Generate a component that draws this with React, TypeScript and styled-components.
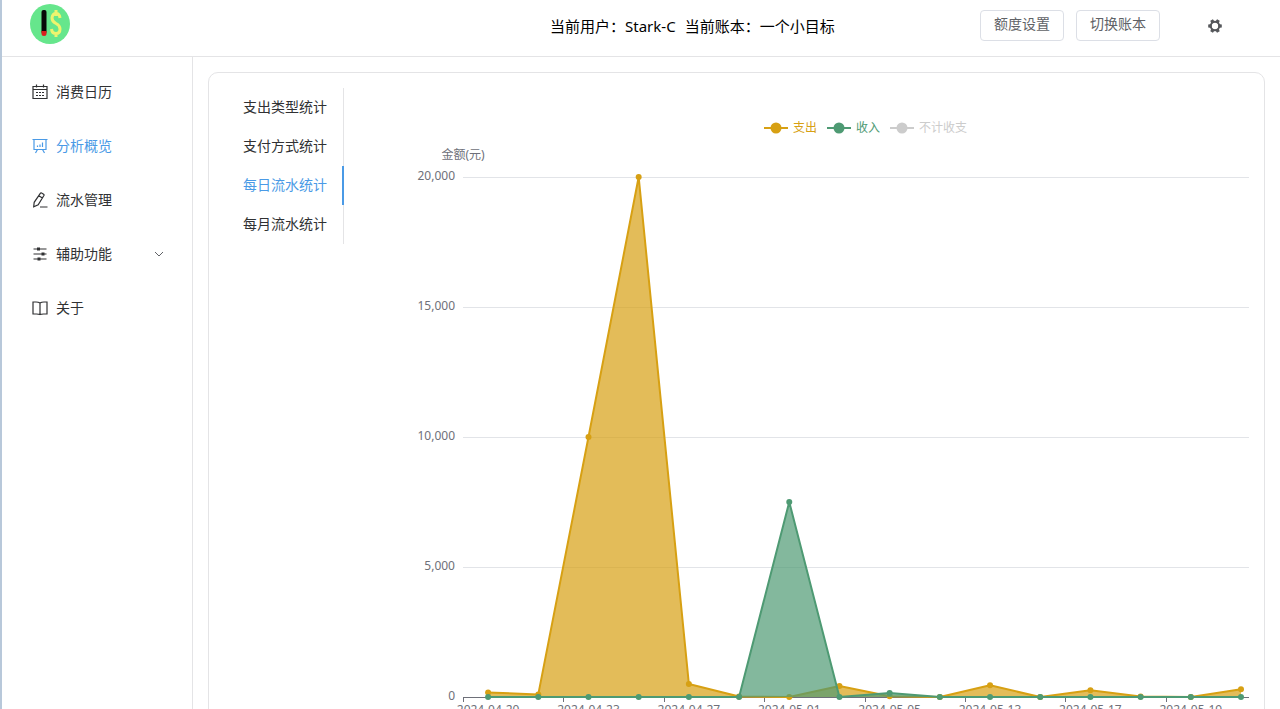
import React, { useEffect, useRef, useState } from "react";
import styled, { createGlobalStyle } from "styled-components";

const GlobalStyle = createGlobalStyle`
  *, *::before, *::after { box-sizing: border-box; }
  body {
    margin: 0;
    background: #fff;
    color: #303133;
    font-family: "Noto Sans", "Noto Sans CJK SC", sans-serif;
    font-size: 14px;
  }
  button { font: inherit; }
`;

const blue = "#4a9ae6";
const line = "#e4e4e6";

const Page = styled.div`
  display: flex;
  flex-direction: column;
  height: 100vh;
  border-left: 2px solid #b8c8da;
`;

const Header = styled.header`
  display: grid;
  grid-template-columns: 7fr 10fr 300px;
  flex: none;
  height: 57px;
  border-bottom: 1px solid ${line};
`;

const Brand = styled.a`
  display: block;
  justify-self: start;
  margin: 4px 0 0 28px;
  height: 40px;
`;

const Account = styled.p`
  display: flex;
  justify-content: center;
  align-items: center;
  gap: 9px;
  margin: 0;
  padding-bottom: 4px;
  color: #000;
  font-size: 15px;
  line-height: 24px;
  white-space: nowrap;
`;

const Actions = styled.div`
  display: flex;
  align-items: center;
  gap: 12px;
  padding: 0 58px 5px 0;
`;

const OutlineButton = styled.button`
  height: 31px;
  padding: 0 13px 3px;
  border: 1px solid #dcdfe6;
  border-radius: 4px;
  background: #fff;
  color: #606266;
  line-height: 20px;
  cursor: pointer;
`;

const IconButton = styled.button`
  display: flex;
  margin-left: auto;
  padding: 0;
  border: 0;
  background: none;
  color: #55575b;
  cursor: pointer;
`;

const Body = styled.div`
  display: flex;
  flex: 1;
  min-height: 0;
`;

const Sidebar = styled.nav`
  flex: none;
  width: 191px;
  padding-top: 8px;
  border-right: 1px solid ${line};
`;

const MenuLink = styled.a<{ $active?: boolean }>`
  display: flex;
  align-items: center;
  gap: 8px;
  height: 54px;
  padding: 0 28px 0 30px;
  color: ${(p) => (p.$active ? blue : "#303133")};
  line-height: 20px;
  text-decoration: none;
`;

const MenuLabel = styled.span`
  flex: 1;
`;

const Main = styled.main`
  flex: 1;
  min-width: 0;
  padding: 15px 15px 16px;
  overflow-y: auto;
  scrollbar-width: none;
`;

const Card = styled.section`
  display: flex;
  padding: 15px;
  border: 1px solid ${line};
  border-radius: 10px;
`;

const Tabs = styled.div`
  flex: none;
  align-self: flex-start;
  width: 120px;
  border-right: 1px solid ${line};
`;

const Tab = styled.button<{ $active?: boolean }>`
  display: block;
  width: 120px;
  height: 39px;
  padding: 0 16px 2px 19px;
  border: 0;
  border-right: 2px solid ${(p) => (p.$active ? blue : "transparent")};
  background: none;
  color: ${(p) => (p.$active ? blue : "#303133")};
  line-height: 20px;
  text-align: left;
  white-space: nowrap;
  cursor: pointer;
`;

const ChartPanel = styled.div`
  flex: 1;
  min-width: 0;
`;

const Legend = styled.div`
  display: flex;
  justify-content: center;
  gap: 10px;
  padding: 32px 0 0 138px;
`;

const LegendItem = styled.button<{ $color: string }>`
  display: flex;
  align-items: center;
  gap: 5px;
  height: 16px;
  padding: 0;
  border: 0;
  background: none;
  color: ${(p) => p.$color};
  font-size: 12px;
  line-height: 16px;
  cursor: pointer;
`;

const Plot = styled.svg`
  display: block;
  width: 100%;
  height: 600px;
  font-size: 12px;
  fill: #6e7079;
`;

type IconName = "calendar" | "board" | "edit" | "sliders" | "book";

const iconShapes: Record<IconName, React.ReactNode> = {
  calendar: (
    <>
      <path d="M1 2.500h14v12H1zM1 5.500h14M4.500 .5v3M11.500 .5v3" />
      <path d="M4 8.500h2M7 8.500h2M10 8.500h2M4 11.500h2M7 11.500h2M10 11.500h2" />
    </>
  ),
  board: (
    <>
      <path d="M.5 1.500h15M2 1.500v10h12v-10M5.500 11.500l-2 3.500M10.500 11.500l2 3.500" />
      <path d="M5.500 9V7.500M8 9V6.500M10.500 9V4.500" />
    </>
  ),
  edit: (
    <path d="M8.300 1.300Q8.800 .6 9.600 1L11.600 2.200Q12.300 2.700 11.900 3.500L6.200 12.800L1.700 14.800L2.200 10.300ZM6.800 3.800L10.400 6M8 15H15.500" />
  ),
  sliders: (
    <>
      <path d="M1.500 3h13M1.500 8h13M1.500 13h13" />
      <path d="M6.500 1.500v3M11 6.500v3M7 11.500v3" strokeWidth="3" />
    </>
  ),
  book: <path d="M8 3v11.500M8 3Q6.500 2 4 2H1v12h3.500Q7 14 8 14.500Q9 14 11.500 14H15V2h-3Q9.500 2 8 3Z" />,
};

const Icon = ({ name }: { name: IconName }) => (
  <svg
    width="16"
    height="16"
    viewBox="0 0 16 16"
    fill="none"
    stroke="currentColor"
    strokeWidth="1.200"
    aria-hidden="true"
  >
    {iconShapes[name]}
  </svg>
);

const Chevron = () => (
  <svg width="10" height="10" viewBox="0 0 10 10" fill="none" stroke="#606266" aria-hidden="true">
    <path d="M1 3l4 4 4-4" />
  </svg>
);

const Gear = () => (
  <svg width="14" height="14" viewBox="0 0 14 14" aria-hidden="true">
    <circle cx="7" cy="7" r="4.200" fill="none" stroke="currentColor" strokeWidth="2" />
    {[30, 90, 150, 210, 270, 330].map((a) => (
      <path key={a} d="M5 3.500L5.500 .2h3l.5 3.300z" fill="currentColor" transform={`rotate(${a} 7 7)`} />
    ))}
  </svg>
);

const Logo = () => (
  <svg width="40" height="40" viewBox="0 0 40 40" role="img" aria-label="账本">
    <circle cx="20" cy="20" r="20" fill="#66e68c" />
    <rect x="11.500" y="6" width="5" height="24" rx="2" fill="#080808" />
    <path d="M11.500 27h5v2.500a2.500 2.500 0 0 1-5 0z" fill="#d81e1e" />
    <path
      d="M30 14Q29.500 9.500 26 9.500T22 14Q22 17.500 26 19.500T30 25Q30 29.500 26 29.500T21.500 25M26 6v6M26 28v5"
      fill="none"
      stroke="#eef46e"
      strokeWidth="3"
    />
  </svg>
);

const menu: { icon: IconName; label: string; sub?: boolean }[] = [
  { icon: "calendar", label: "消费日历" },
  { icon: "board", label: "分析概览" },
  { icon: "edit", label: "流水管理" },
  { icon: "sliders", label: "辅助功能", sub: true },
  { icon: "book", label: "关于" },
];

const tabs = ["支出类型统计", "支付方式统计", "每日流水统计", "每月流水统计"];

const dates = [
  "2024-04-20", "2024-04-23", "2024-04-27", "2024-05-01",
  "2024-05-05", "2024-05-13", "2024-05-17", "2024-05-19",
];

const series = [
  {
    name: "支出",
    color: "#d7a013",
    values: [170, 100, 10000, 20000, 500, 20, 0, 420, 30, 0, 450, 0, 260, 20, 0, 300],
  },
  {
    name: "收入",
    color: "#4e9a73",
    values: [0, 0, 0, 0, 0, 0, 7500, 0, 150, 0, 0, 0, 0, 0, 0, 0],
  },
  { name: "不计收支", color: "#5470c6", values: [] as number[] },
];

const left = 119;
const top = 41;
const bottom = 561;

function DailyChart() {
  const ref = useRef<HTMLDivElement>(null);
  const [width, setWidth] = useState(905);
  const [hidden, setHidden] = useState<string[]>(["不计收支"]);

  useEffect(() => {
    const node = ref.current;
    if (!node) return;
    const observer = new ResizeObserver(([entry]) => setWidth(entry.contentRect.width));
    observer.observe(node);
    return () => observer.disconnect();
  }, []);

  const band = (width - left - 8) / 15.5;
  const x = (i: number) => left + band * (i + 0.5);
  const y = (v: number) => bottom - (v / 20000) * (bottom - top);
  const toggle = (name: string) =>
    setHidden((h) => (h.includes(name) ? h.filter((n) => n !== name) : [...h, name]));

  return (
    <ChartPanel ref={ref}>
      <Legend>
        {series.map((s) => {
          const off = hidden.includes(s.name);
          return (
            <LegendItem key={s.name} $color={off ? "#ccc" : s.color} aria-pressed={!off} onClick={() => toggle(s.name)}>
              <svg width="24" height="12" viewBox="0 0 24 12" aria-hidden="true">
                <path d="M0 6h24" stroke="currentColor" strokeWidth="2" />
                <circle cx="12" cy="6" r="5.500" fill="currentColor" />
              </svg>
              {s.name}
            </LegendItem>
          );
        })}
      </Legend>
      <Plot>
        <text x={left} y={23} textAnchor="middle">金额(元)</text>
        {[0, 5000, 10000, 15000, 20000].map((v) => (
          <g key={v}>
            {v > 0 && <path d={`M${left} ${y(v) + 0.5}H${width}`} stroke="#e2e4e8" />}
            <text x={left - 8} y={y(v) + 3} textAnchor="end">{v.toLocaleString("en-US")}</text>
          </g>
        ))}
        <path d={`M${left} ${bottom + 0.5}H${width}`} stroke="#6e7079" />
        {dates.map((d, i) => (
          <g key={d}>
            <path d={`M${Math.round(left + band * 2 * i) + 0.5} ${bottom}v5`} stroke="#6e7079" />
            <text x={x(i * 2)} y={bottom + 17} textAnchor="middle">{d}</text>
          </g>
        ))}
        {series.filter((s) => s.values.length > 0 && !hidden.includes(s.name)).map((s) => {
          const points = s.values.map((v, i) => `${x(i)} ${y(v)}`).join("L");
          return (
            <g key={s.name}>
              <path d={`M${points}L${x(15)} ${bottom}L${x(0)} ${bottom}Z`} fill={s.color} opacity="0.7" />
              <path d={`M${points}`} fill="none" stroke={s.color} strokeWidth="2" strokeLinejoin="bevel" />
              {s.values.map((v, i) => (
                <circle key={i} cx={x(i)} cy={y(v)} r="3" fill={s.color} />
              ))}
            </g>
          );
        })}
      </Plot>
    </ChartPanel>
  );
}

export default function App() {
  const [tab, setTab] = useState(2);
  return (
    <>
      <GlobalStyle />
      <Page>
        <Header>
          <Brand href="#"><Logo /></Brand>
          <Account>
            <span>当前用户：Stark-C</span>
            <span>当前账本：一个小目标</span>
          </Account>
          <Actions>
            <OutlineButton>额度设置</OutlineButton>
            <OutlineButton>切换账本</OutlineButton>
            <IconButton aria-label="设置"><Gear /></IconButton>
          </Actions>
        </Header>
        <Body>
          <Sidebar>
            {menu.map((m, i) => (
              <MenuLink key={m.label} href="#" $active={i === 1}>
                <Icon name={m.icon} />
                <MenuLabel>{m.label}</MenuLabel>
                {m.sub && <Chevron />}
              </MenuLink>
            ))}
          </Sidebar>
          <Main>
            <Card>
              <Tabs role="tablist">
                {tabs.map((t, i) => (
                  <Tab key={t} role="tab" aria-selected={i === tab} $active={i === tab} onClick={() => setTab(i)}>
                    {t}
                  </Tab>
                ))}
              </Tabs>
              <DailyChart />
            </Card>
          </Main>
        </Body>
      </Page>
    </>
  );
}
